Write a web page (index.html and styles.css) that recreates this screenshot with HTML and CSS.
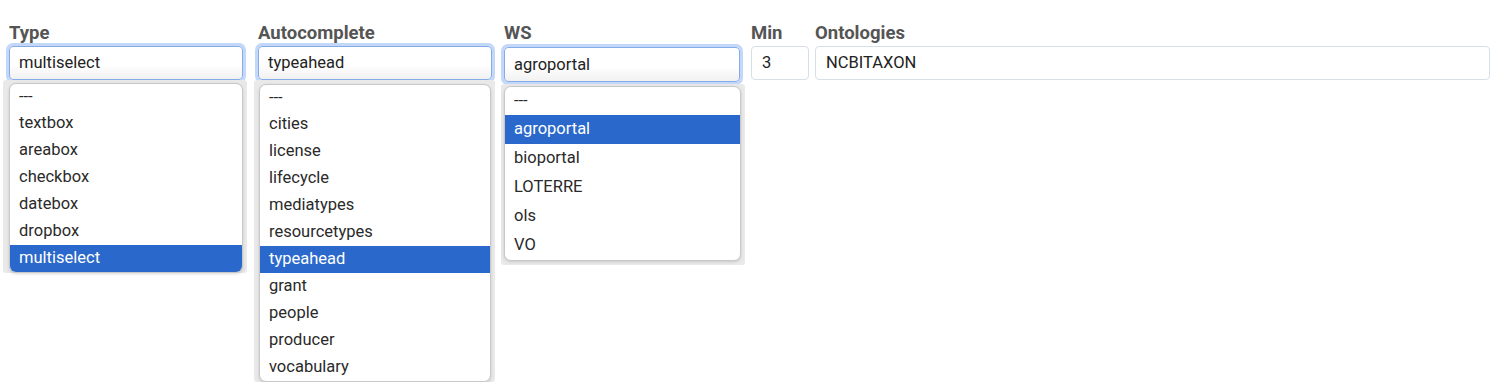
FILE: index.html
```html
<!DOCTYPE html>
<html>
<head>
<meta charset="utf-8">
<link rel="stylesheet" href="styles.css">
</head>
<body>
<div class="row">
  <div class="field f-type">
    <div class="label">Type</div>
    <div class="select">multiselect</div>
    <div class="dd-frame d-type">
      <div class="opts">
        <div class="opt">---</div><div class="opt">textbox</div><div class="opt">areabox</div><div class="opt">checkbox</div><div class="opt">datebox</div><div class="opt">dropbox</div><div class="opt sel">multiselect</div>
      </div>
    </div>
  </div>
  <div class="field f-auto">
    <div class="label">Autocomplete</div>
    <div class="select">typeahead</div>
    <div class="dd-frame d-auto">
      <div class="opts">
        <div class="opt">---</div><div class="opt">cities</div><div class="opt">license</div><div class="opt">lifecycle</div><div class="opt">mediatypes</div><div class="opt">resourcetypes</div><div class="opt sel">typeahead</div><div class="opt">grant</div><div class="opt">people</div><div class="opt">producer</div><div class="opt">vocabulary</div>
      </div>
    </div>
  </div>
  <div class="field f-ws">
    <div class="label">WS</div>
    <div class="select tall">agroportal</div>
    <div class="dd-frame d-ws">
      <div class="opts wide">
        <div class="opt">---</div><div class="opt sel">agroportal</div><div class="opt">bioportal</div><div class="opt">LOTERRE</div><div class="opt">ols</div><div class="opt">VO</div>
      </div>
    </div>
  </div>
  <div class="field f-min">
    <div class="label">Min</div>
    <div class="input">3</div>
  </div>
  <div class="field f-onto">
    <div class="label">Ontologies</div>
    <div class="input">NCBITAXON</div>
  </div>
</div>
</body>
</html>
```
FILE: styles.css
```css
html, body {
  margin: 0;
  padding: 0;
  background: #ffffff;
}
body {
  font-family: Roboto, "Liberation Sans", Arial, sans-serif;
  color: #222;
}
.row {
  display: flex;
  align-items: flex-start;
  padding: 22px 0 0 9px;
}
.field {
  display: flex;
  flex-direction: column;
}
.f-type { width: 234px; margin-right: 15px; }
.f-auto { width: 234px; margin-right: 12px; }
.f-ws { width: 236px; margin-right: 11px; }
.f-min { width: 58px; margin-right: 6px; }
.f-onto { width: 675px; }

.label {
  font-size: 18.5px;
  font-weight: 700;
  color: #555555;
  line-height: 22px;
  height: 22px;
  margin-bottom: 2px;
}
.select, .input {
  box-sizing: border-box;
  height: 34px;
  border-radius: 4px;
  font-size: 16.5px;
  line-height: 32px;
  padding: 0 9px;
  color: #222;
}
.select {
  border: 1px solid #86abe9;
  background: linear-gradient(#ffffff 55%, #f1f1f1);
  box-shadow: 0 0 0 3px #c3d8f8;
}
.select.tall { height: 35px; margin-top: 1px; line-height: 34px; }
.input {
  border: 1px solid #d6dfe9;
  background: #fff;
  padding: 0 10px;
}

.dd-frame {
  background: #e9e9e9;
  border-radius: 3px;
  padding: 2px 4px;
  box-sizing: border-box;
}
.d-type { margin: 0 0 0 -6px; width: 244px; height: 193px; padding: 3px 4px 2px 6px; }
.d-auto { margin: 0 0 0 -4px; width: 241px; height: 302px; padding: 4px 4px 2px 5px; }
.d-ws { margin: 2px 0 0 -3px; width: 244px; height: 181px; padding: 2px 4px 7px 3px; }

.opts {
  background: #fff;
  border: 1px solid #c8c8c8;
  border-radius: 7px;
  overflow: hidden;
  box-shadow: 0 1px 3px rgba(0,0,0,0.15);
}
.opt {
  font-size: 16.5px;
  height: 27px;
  line-height: 26px;
  padding: 0 9px;
  color: #2a2a2a;
  white-space: nowrap;
}
.opt:first-child { height: 26px; }
.opts.wide .opt { height: 29px; line-height: 28px; }
.opts.wide .opt:first-child { height: 28px; }
.opt.sel {
  background: #2a69cb;
  color: #fff;
}
```
